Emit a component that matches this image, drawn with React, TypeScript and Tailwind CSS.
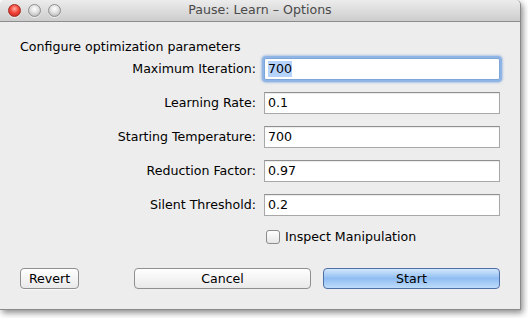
import { useState } from "react";

const font = { fontFamily: '"Lucida Grande", "DejaVu Sans", sans-serif' };

const fields = [
  { label: "Maximum Iteration:", value: "700", focused: true },
  { label: "Learning Rate:", value: "0.1" },
  { label: "Starting Temperature:", value: "700" },
  { label: "Reduction Factor:", value: "0.97" },
  { label: "Silent Threshold:", value: "0.2" },
];

function Light({ red }: { red?: boolean }) {
  return (
    <span
      className={
        red
          ? "h-[13px] w-[13px] rounded-full border border-[#a32b23] bg-[radial-gradient(circle_at_50%_35%,#ffb0a8_0%,#f4473c_45%,#b81d14_100%)] shadow-[0_1px_0_rgba(255,255,255,0.6)]"
          : "h-[13px] w-[13px] rounded-full border border-[#8e8e8e] bg-[radial-gradient(circle_at_50%_35%,#ffffff_0%,#e0e0e0_45%,#a9a9a9_100%)] shadow-[0_1px_0_rgba(255,255,255,0.6)]"
      }
    />
  );
}

export default function App() {
  const [inspect, setInspect] = useState(false);

  return (
    <div className="h-[318px] w-[528px] bg-white" style={font}>
      <div className="flex h-[310px] w-[521px] flex-col overflow-hidden rounded-t-[5px] border-r border-b border-[#8a8a8a] bg-[#ededed] shadow-[2px_3px_6px_rgba(0,0,0,0.45)]">
        <div className="relative flex h-[22px] shrink-0 items-center border-b border-[#8d8d8d] bg-gradient-to-b from-[#ececec] to-[#cdcdcd] pl-[8px]">
          <div className="flex gap-[7px]">
            <Light red />
            <Light />
            <Light />
          </div>
          <div className="absolute inset-x-0 top-0 flex h-[21px] items-center justify-center text-[12.6px] text-[#4a4a4a]">
            Pause: Learn – Options
          </div>
        </div>

        <div className="flex flex-1 flex-col px-[20px] pt-[17px] text-[12.6px] text-black">
          <div className="leading-[16px]">Configure optimization parameters</div>

          <div className="mt-[3px] grid grid-cols-[236px_236px] items-center gap-x-[8px] gap-y-[12px]">
            {fields.map((f) => (
              <div key={f.label} className="contents">
                <div className="text-right leading-[16px]">{f.label}</div>
                <div
                  className={
                    f.focused
                      ? "flex h-[22px] items-center rounded-[2px] border border-[#7ea6d6] bg-white pl-[3px] shadow-[0_0_0_2px_#8fb5e6,0_0_2px_3px_rgba(120,160,220,0.5)]"
                      : "flex h-[22px] items-center border border-[#a8a8a8] border-t-[#8f8f8f] bg-white pl-[3px] shadow-[inset_0_1px_1px_rgba(0,0,0,0.08)]"
                  }
                >
                  <span className={f.focused ? "bg-[#b5d3fb] leading-[16px]" : "leading-[16px]"}>{f.value}</span>
                </div>
              </div>
            ))}
            <div />
            <label className="mt-[1px] flex items-center gap-[5px] pl-[2px]">
              <input
                type="checkbox"
                checked={inspect}
                onChange={(e) => setInspect(e.target.checked)}
                className="h-[14px] w-[14px] appearance-none rounded-[3px] border border-[#8c8c8c] bg-gradient-to-b from-white to-[#e6e6e6]"
              />
              <span className="leading-[16px]">Inspect Manipulation</span>
            </label>
          </div>

          <div className="mt-[23px] flex items-center">
            <button className="h-[21px] w-[59px] rounded-[4px] border border-[#8f8f8f] bg-gradient-to-b from-white to-[#e9e9e9] text-[12.6px] leading-[16px] shadow-[0_1px_0_rgba(255,255,255,0.7)]">
              Revert
            </button>
            <button className="ml-[55px] h-[21px] w-[177px] rounded-[4px] border border-[#8f8f8f] bg-gradient-to-b from-white to-[#e9e9e9] text-[12.6px] leading-[16px]">
              Cancel
            </button>
            <button className="ml-[12px] h-[21px] w-[177px] rounded-[4px] border border-[#4f6fa8] bg-gradient-to-b from-[#d3e6fb] via-[#8fbdf2] to-[#bfdcfb] text-[12.6px] leading-[16px]">
              Start
            </button>
          </div>
        </div>
      </div>
    </div>
  );
}
